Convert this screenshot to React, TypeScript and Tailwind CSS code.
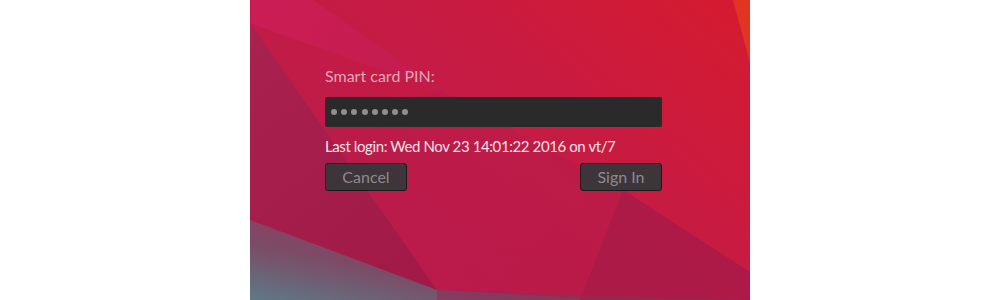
import React from 'react'

function Wallpaper() {
  return (
    <svg className="absolute inset-0 h-full w-full" viewBox="0 0 500 300" preserveAspectRatio="none">
      <defs>
        <linearGradient id="base" x1="1" y1="0" x2="0" y2="0.7">
          <stop offset="0" stopColor="#d51a2e" />
          <stop offset="0.45" stopColor="#c71b43" />
          <stop offset="1" stopColor="#bb1b4d" />
        </linearGradient>
        <linearGradient id="topleft" x1="0" y1="0" x2="1" y2="0.3">
          <stop offset="0" stopColor="#cb1d55" />
          <stop offset="1" stopColor="#c41c4e" />
        </linearGradient>
        <linearGradient id="dark" x1="0" y1="0" x2="0.6" y2="1">
          <stop offset="0" stopColor="#a9214f" />
          <stop offset="1" stopColor="#a21a47" />
        </linearGradient>
        <linearGradient id="grey" x1="0.7" y1="0.2" x2="0" y2="1">
          <stop offset="0" stopColor="#933a5c" />
          <stop offset="0.5" stopColor="#7c4b66" />
          <stop offset="1" stopColor="#5c7a86" />
        </linearGradient>
        <linearGradient id="lower" x1="0" y1="0" x2="1" y2="0.6">
          <stop offset="0" stopColor="#b81b4c" />
          <stop offset="1" stopColor="#b21a49" />
        </linearGradient>
      </defs>
      <rect width="500" height="300" fill="url(#base)" />
      {/* upper-left lighter wedge */}
      <polygon points="0,0 63,0 200,95 0,23" fill="url(#topleft)" />
      {/* lower middle tone */}
      <polygon points="70,123 190,90 373,190 500,272 500,300 187,300 187,290" fill="url(#lower)" opacity="0.5" />
      {/* bottom right darker */}
      <polygon points="373,190 500,272 500,300 330,300" fill="#a91a47" opacity="0.8" />
      {/* left dark slab */}
      <polygon points="0,23 187,290 0,220" fill="url(#dark)" />
      {/* bottom-left grey */}
      <polygon points="0,220 187,290 330,298 330,300 0,300" fill="url(#grey)" />
      <polygon points="187,290 500,300 187,300" fill="#8c2f55" opacity="0.6" />
      {/* orange sliver */}
      <polygon points="483,0 500,0 500,63" fill="#e23422" />
    </svg>
  )
}

export default function App() {
  const font = { fontFamily: 'Lato, "Open Sans", sans-serif' }
  return (
    <div className="flex h-[300px] w-full justify-center bg-white" style={font}>
      <div className="relative h-full w-[500px] overflow-hidden">
        <Wallpaper />
        <div className="relative flex w-[412px] flex-col pl-[75px] pt-[66px]">
          <div className="text-[16px] leading-[20px] text-[#e0a6b9]">Smart card PIN:</div>
          <div className="mt-[11px] flex h-[30px] items-center gap-[4.2px] rounded-[2px] bg-[#2a2a2a] px-[6px]">
            {Array.from({ length: 8 }).map((_, i) => (
              <span key={i} className="h-[6px] w-[6px] rounded-full bg-[#8f8f8f]" />
            ))}
          </div>
          <div className="mt-[9px] text-[15px] leading-[20px] tracking-[-0.4px] text-[#f3e1e7]">
            Last login: Wed Nov 23 14:01:22 2016 on vt/7
          </div>
          <div className="mt-[7px] flex justify-between">
            <button className="h-[28px] w-[82px] rounded-[3px] border border-[#1d191b] bg-[#3d353a] text-[16px] text-[#8d8a8c]">
              Cancel
            </button>
            <button className="h-[28px] w-[82px] rounded-[3px] border border-[#1d191b] bg-[#3d353a] text-[16px] text-[#8d8a8c]">
              Sign In
            </button>
          </div>
        </div>
      </div>
    </div>
  )
}
